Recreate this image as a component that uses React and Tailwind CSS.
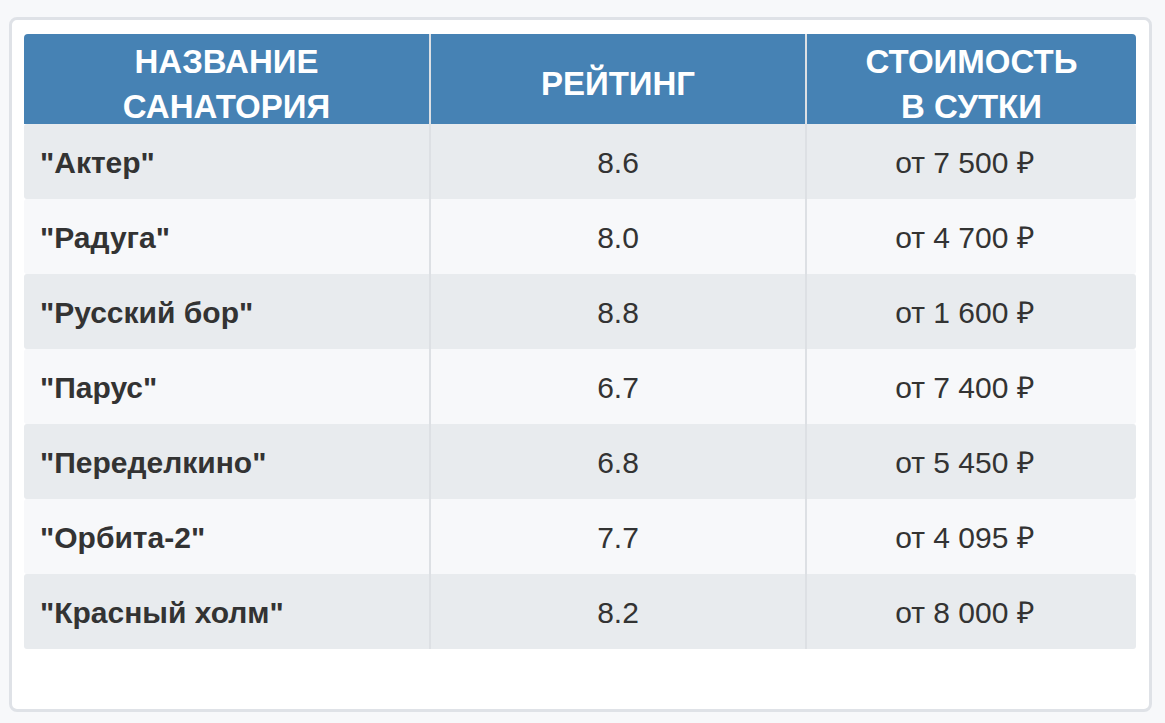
import React from "react";

const rows = [
  { name: '"Актер"', rating: "8.6", price: "от 7 500 ₽" },
  { name: '"Радуга"', rating: "8.0", price: "от 4 700 ₽" },
  { name: '"Русский бор"', rating: "8.8", price: "от 1 600 ₽" },
  { name: '"Парус"', rating: "6.7", price: "от 7 400 ₽" },
  { name: '"Переделкино"', rating: "6.8", price: "от 5 450 ₽" },
  { name: '"Орбита-2"', rating: "7.7", price: "от 4 095 ₽" },
  { name: '"Красный холм"', rating: "8.2", price: "от 8 000 ₽" },
];

const App = () => {
  return (
    <div
      className="min-h-screen bg-[#f7f8fa] pt-[17px] pl-[9px]"
      style={{ fontFamily: '"Liberation Sans", Arial, sans-serif' }}
    >
      <div className="w-[1143px] h-[695px] bg-white border-[3px] border-[#dfe2e7] rounded-[8px] pl-[12px] pt-[14px]">
        <div className="w-[1112px]">
          <div className="flex h-[90px] bg-[#4682b4] rounded-t-[4px] text-white font-bold text-[33px] leading-[45px] uppercase text-center">
            <div className="w-[405px] flex items-center justify-center pt-[9px]">
              <span>Название<br />санатория</span>
            </div>
            <div className="w-[376px] flex items-center justify-center pt-[8px] border-l-2 border-[#dde0e4]">
              <span>Рейтинг</span>
            </div>
            <div className="flex-1 flex items-center justify-center pt-[9px] border-l-2 border-[#dde0e4]">
              <span>Стоимость<br />в сутки</span>
            </div>
          </div>
          {rows.map((r, i) => (
            <div
              key={r.name}
              className={
                "flex h-[75px] text-[30px] text-[#333333] rounded-[3px] " +
                (i % 2 === 0 ? "bg-[#e8ebee]" : "bg-[#f7f8fa]")
              }
            >
              <div className="w-[405px] flex items-center pl-[16px] pt-[2px] font-bold">{r.name}</div>
              <div className="w-[376px] flex items-center justify-center pt-[2px] border-l-2 border-[#dde0e4]">
                {r.rating}
              </div>
              <div className="flex-1 flex items-center justify-center pt-[2px] pr-[14px] border-l-2 border-[#dde0e4]">
                {r.price}
              </div>
            </div>
          ))}
        </div>
      </div>
    </div>
  );
};

export default App;
